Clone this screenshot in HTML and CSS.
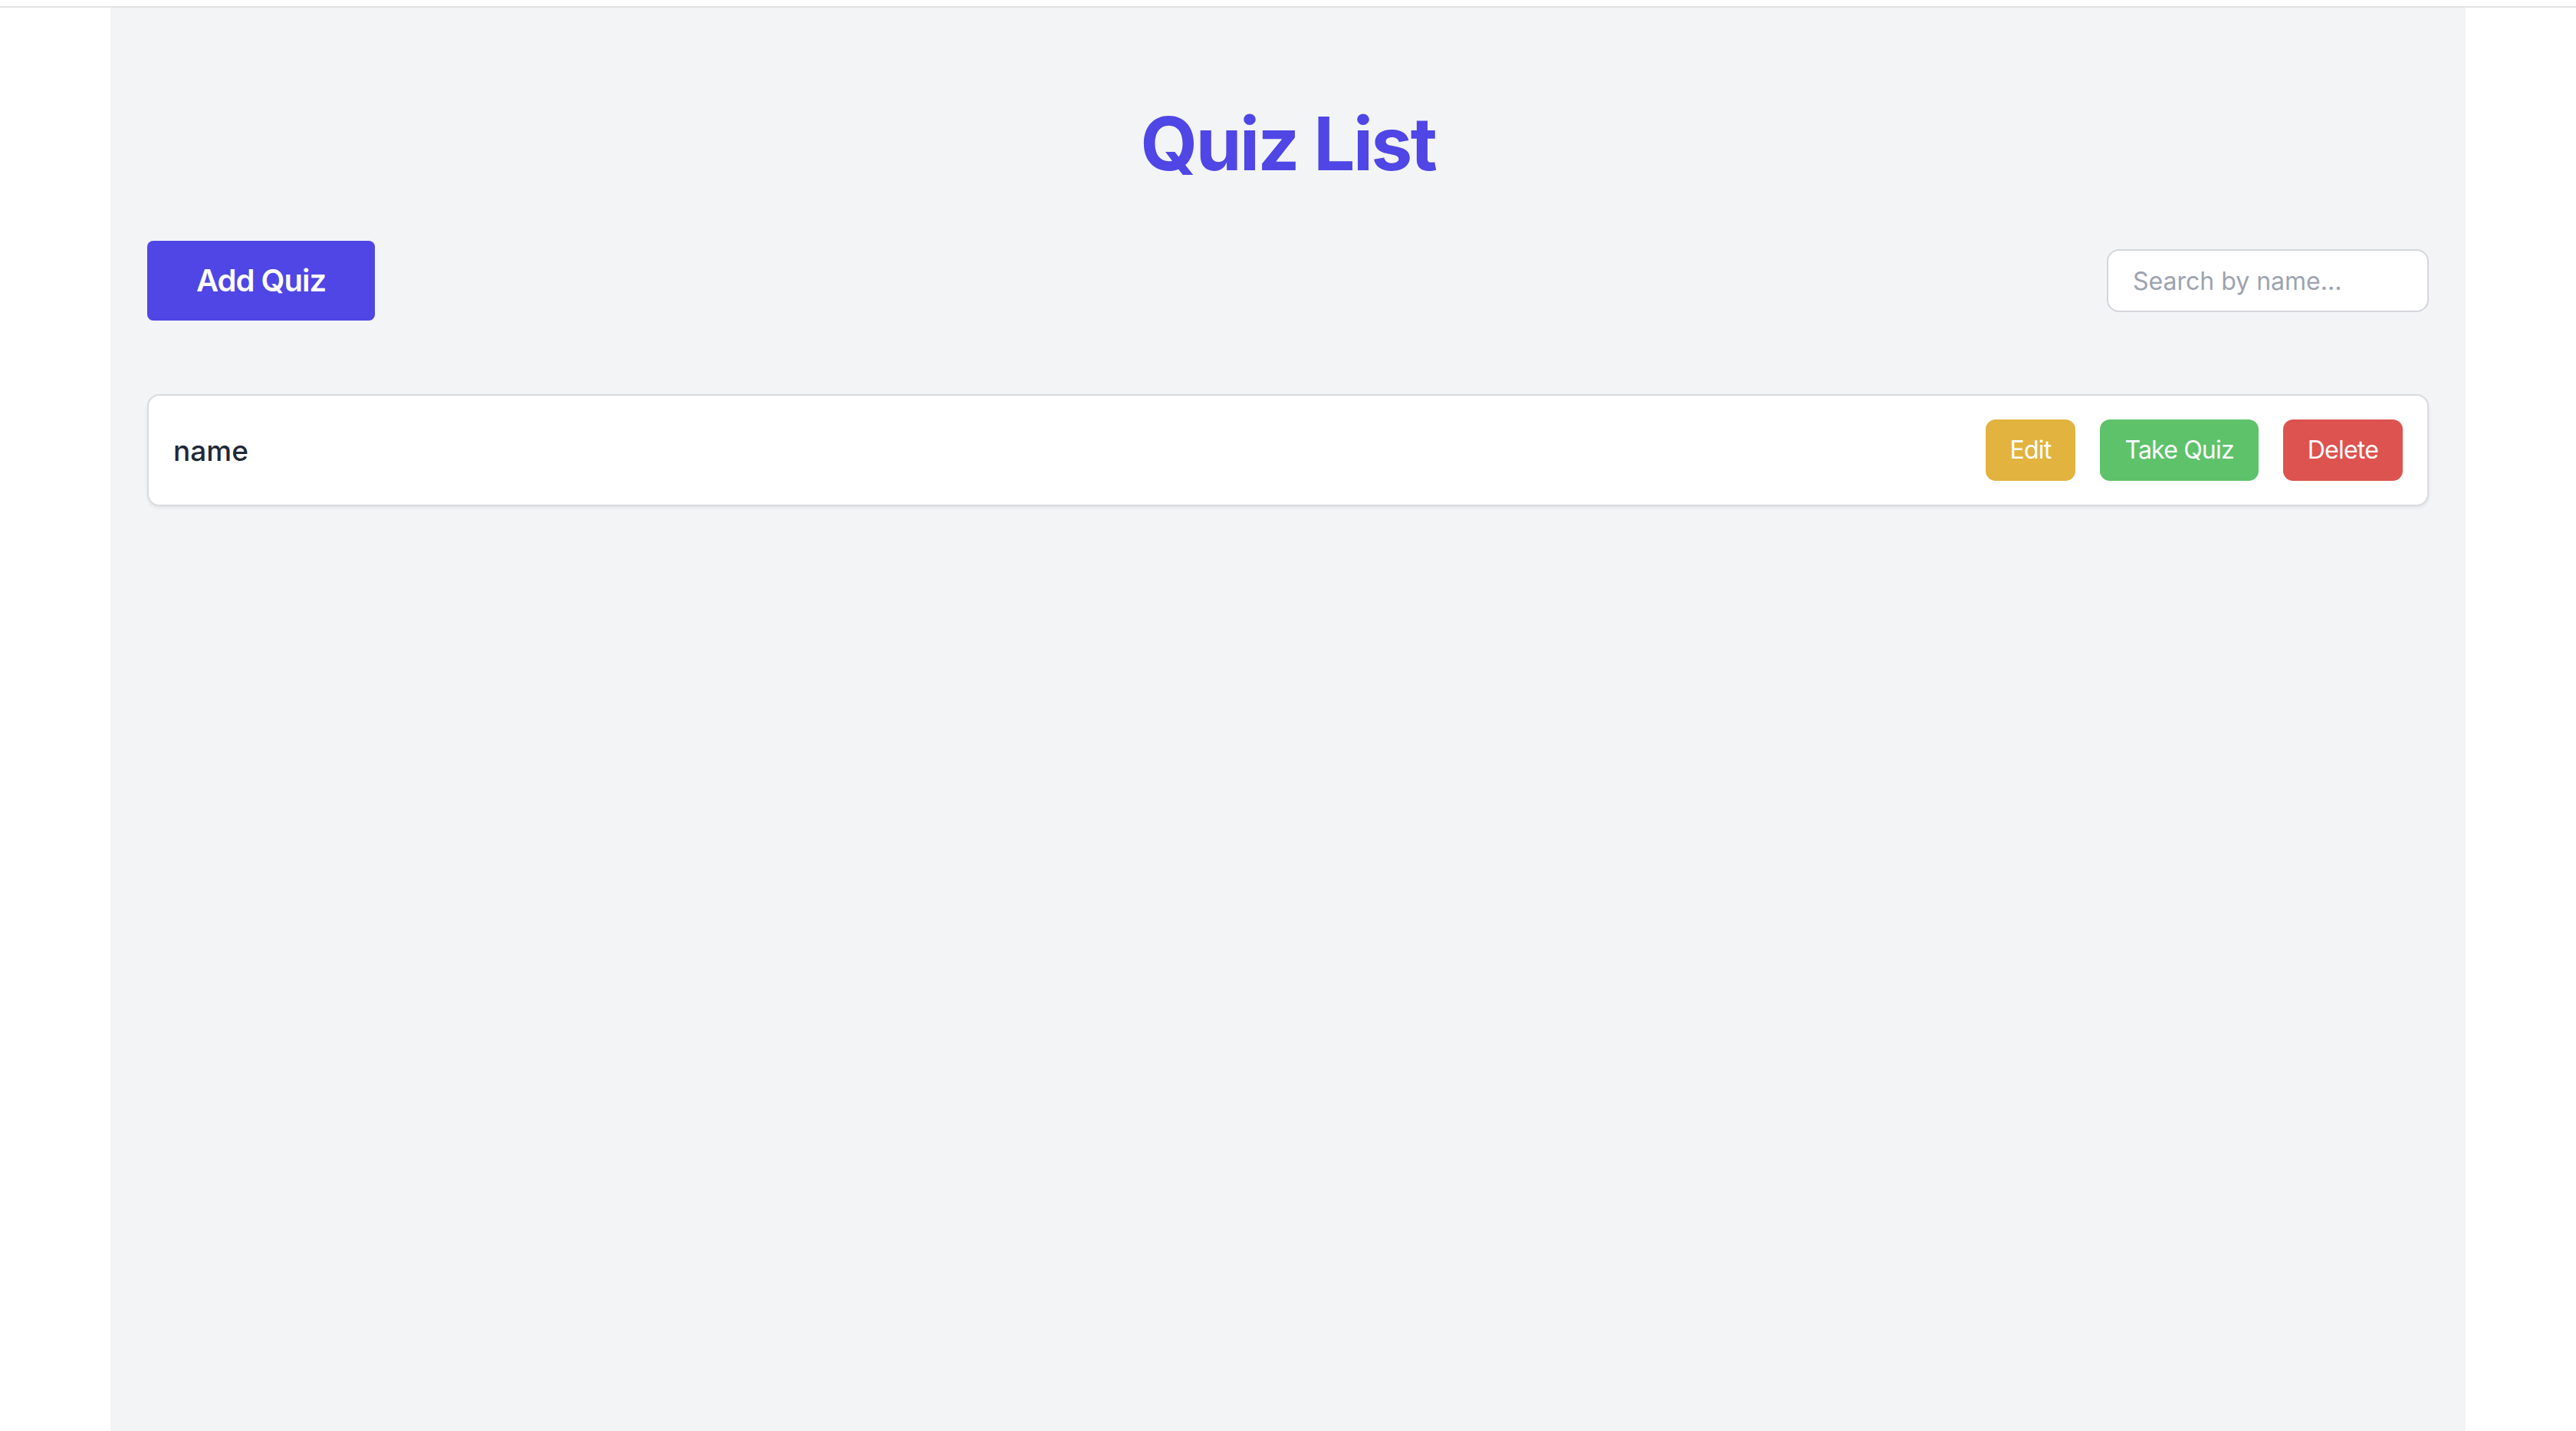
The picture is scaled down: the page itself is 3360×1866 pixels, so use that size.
FILE: index.html
```html
<!DOCTYPE html>
<html lang="en">
<head>
<meta charset="utf-8">
<title>Quiz List</title>
<link rel="stylesheet" href="styles.css">
</head>
<body>
<div class="topline"></div>
<main class="container">
  <h1 class="title">Quiz List</h1>
  <div class="toolbar">
    <button class="add-btn">Add Quiz</button>
    <input class="search" type="text" placeholder="Search by name...">
  </div>
  <ul class="quiz-list">
    <li class="quiz-card">
      <span class="quiz-name">name</span>
      <div class="actions">
        <button class="btn btn-edit">Edit</button>
        <button class="btn btn-take">Take Quiz</button>
        <button class="btn btn-delete">Delete</button>
      </div>
    </li>
  </ul>
</main>
</body>
</html>
```

FILE: styles.css
```css
html, body {
  margin: 0;
  padding: 0;
  background: #ffffff;
  font-family: Inter, "Noto Sans", "Liberation Sans", sans-serif;
  height: 100%;
}
body {
  display: flex;
  flex-direction: column;
  height: 1866px;
  overflow: hidden;
}
.topline {
  height: 8px;
  border-bottom: 2px solid #e2e2e2;
  flex: none;
}
.container {
  width: 3072px;
  box-sizing: border-box;
  margin: 0 auto;
  padding: 48px;
  background: #f3f4f6;
  flex: 1;
}
.title {
  margin: 81px 0 79px;
  font-size: 96px;
  line-height: 96px;
  font-weight: 700;
  color: #4f46e5;
  text-align: center;
  letter-spacing: -2.5px;
}
.toolbar {
  display: flex;
  justify-content: space-between;
  align-items: center;
  margin-bottom: 96px;
}
.add-btn {
  background: #4f46e5;
  color: #ffffff;
  border: none;
  border-radius: 8px;
  padding: 24px 64px;
  font-family: inherit;
  font-size: 40px;
  line-height: 56px;
  font-weight: 600;
  letter-spacing: -1px;
}
.search {
  width: 420px;
  height: 82px;
  box-sizing: border-box;
  border: 2px solid #d4d6dc;
  border-radius: 16px;
  padding: 0 32px;
  font-family: inherit;
  font-size: 32px;
  color: #111827;
  background: #ffffff;
  outline: none;
}
.search::placeholder {
  color: #9ca3af;
}
.quiz-list {
  list-style: none;
  margin: 0;
  padding: 0;
}
.quiz-card {
  display: flex;
  align-items: center;
  justify-content: space-between;
  background: #ffffff;
  border: 2px solid #d9dbe0;
  border-radius: 16px;
  padding: 31px 32px;
  box-shadow: 0 2px 4px rgba(0, 0, 0, 0.08);
}
.quiz-name {
  font-size: 37px;
  font-weight: 500;
  color: #1f2937;
}
.actions {
  display: flex;
  gap: 32px;
}
.btn {
  border: none;
  border-radius: 13px;
  padding: 16px 32px;
  font-family: inherit;
  font-size: 32px;
  line-height: 48px;
  font-weight: 400;
  letter-spacing: -0.8px;
  color: #ffffff;
}
.btn-edit { background: #e2b33f; }
.btn-take { background: #5ec26b; }
.btn-delete { background: #dd534f; }
```
